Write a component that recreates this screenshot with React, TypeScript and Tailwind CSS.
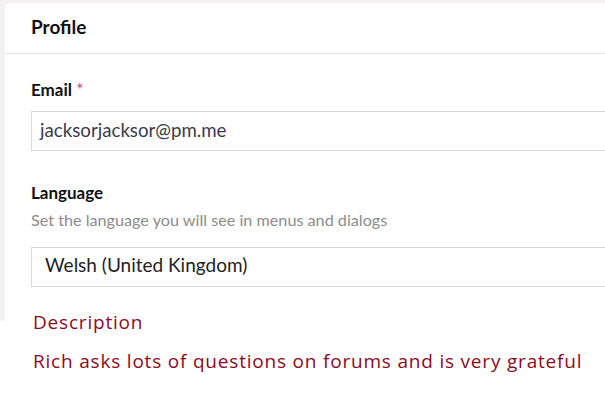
import React from 'react';

export default function App() {
  return (
    <div className="w-[605px] h-[398px] overflow-hidden bg-white font-['Lato',sans-serif]">
      {/* Settings panel */}
      <div className="h-[321px] bg-[#f3f1f1] pt-[3px] pl-[5px]">
        <div className="w-[640px] h-full bg-white rounded-tl-[5px]">
          <div className="h-[51px] border-b border-[#e6e6e6] px-[26px] flex items-center pb-[3px]">
            <h2 className="text-[19px] leading-[24px] font-bold text-[#111]">Profile</h2>
          </div>
          <div className="pl-[26px] pt-[26px]">
            <label className="block text-[17px] font-bold text-[#111] leading-[20px]">
              Email <span className="text-[#c8407a] font-normal">*</span>
            </label>
            <div className="mt-[11px] h-[40px] border border-[#d9d9d9] flex items-center pl-[8px] pb-[2px] text-[18.7px] leading-[24px] text-[#3b3b48]">
              jacksorjacksor@pm.me
            </div>
            <label className="block mt-[32px] text-[17px] font-bold text-[#111] leading-[20px]">Language</label>
            <p className="mt-[7px] text-[16.2px] text-[#8c8c8c] leading-[20px]">Set the language you will see in menus and dialogs</p>
            <div className="mt-[17px] h-[40px] border border-[#d9d9d9] flex items-center pl-[13px] pb-[4px] text-[19px] leading-[24px] text-[#222]">
              Welsh (United Kingdom)
            </div>
          </div>
        </div>
      </div>

      {/* Annotation pasted under the screenshot */}
      <div className="relative -mt-[11px] pl-[33px] text-[#8b0a22] font-['Open_Sans',sans-serif] tracking-[0.8px]">
        <p className="text-[19px] leading-[24px]">Description</p>
        <p className="mt-[15px] text-[19px] leading-[24px]">Rich asks lots of questions on forums and is very grateful</p>
      </div>
    </div>
  );
}
